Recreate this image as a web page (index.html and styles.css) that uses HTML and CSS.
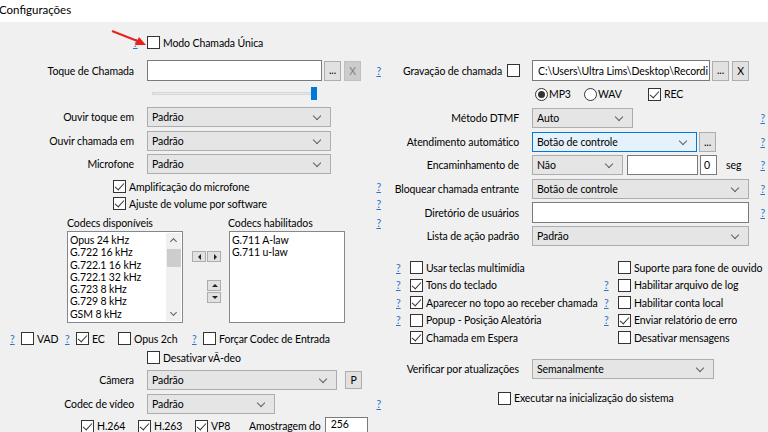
FILE: index.html
```html
<!DOCTYPE html>
<html lang="pt">
<head>
    <meta charset="UTF-8">
    <title>Configurações</title>
    <link rel="stylesheet" href="styles.css">
</head>
<body>
    <div class="titlebar">Configurações</div>

    <div class="dialog">
        <svg class="pointer" width="40" height="20" viewBox="0 0 40 20">
            <line x1="2" y1="2" x2="30" y2="13" stroke="#e8211d" stroke-width="2"/>
            <polygon points="36,16 25,16 29,8" fill="#e8211d"/>
        </svg>

        <div class="col left">
            <div class="row single">
                <a class="help">?</a><span class="cb"></span><span class="txt">Modo Chamada Única</span>
            </div>

            <div class="row tall ringtone">
                <label class="lbl">Toque de Chamada</label>
                <span class="edit w-ring"></span>
                <span class="btn dots">...</span>
                <span class="btn off">X</span>
                <a class="help end">?</a>
            </div>

            <div class="row slider">
                <span class="track"></span><span class="thumb"></span>
            </div>

            <div class="row combo-row first">
                <label class="lbl">Ouvir toque em</label>
                <span class="combo w-dev">Padrão</span>
            </div>
            <div class="row combo-row">
                <label class="lbl">Ouvir chamada em</label>
                <span class="combo w-dev">Padrão</span>
            </div>
            <div class="row combo-row tight">
                <label class="lbl">Microfone</label>
                <span class="combo w-dev">Padrão</span>
            </div>

            <div class="row check mic-boost">
                <span class="cb on"></span><span class="txt">Amplificação do microfone</span>
                <a class="help end">?</a>
            </div>
            <div class="row check mic-soft">
                <span class="cb on"></span><span class="txt">Ajuste de volume por software</span>
                <a class="help end">?</a>
            </div>

            <div class="row codec-heads">
                <span class="head-av">Codecs disponíveis</span>
                <span class="head-en">Codecs habilitados</span>
                <a class="help end">?</a>
            </div>

            <div class="row lists">
                <div class="listbox avail">
                    <div class="items">
                        <div>Opus 24 kHz</div>
                        <div>G.722 16 kHz</div>
                        <div>G.722.1 16 kHz</div>
                        <div>G.722.1 32 kHz</div>
                        <div>G.723 8 kHz</div>
                        <div>G.729 8 kHz</div>
                        <div>GSM 8 kHz</div>
                    </div>
                    <div class="vscroll">
                        <span class="sarrow up"></span>
                        <span class="sthumb"></span>
                        <span class="sarrow down"></span>
                    </div>
                </div>
                <div class="movers">
                    <div class="pair">
                        <span class="mini"><span class="tri l"></span></span><span class="mini"><span class="tri r"></span></span>
                    </div>
                    <div class="updown">
                        <span class="mini"><span class="tri u"></span></span>
                        <span class="mini"><span class="tri d"></span></span>
                    </div>
                </div>
                <div class="listbox enabled">
                    <div class="items">
                        <div>G.711 A-law</div>
                        <div>G.711 u-law</div>
                    </div>
                </div>
            </div>

            <div class="row flags">
                <span class="grp g-vad"><a class="help">?</a><span class="cb"></span><span class="txt">VAD</span></span>
                <span class="grp g-ec"><a class="help">?</a><span class="cb on"></span><span class="txt">EC</span></span>
                <span class="grp g-opus"><span class="cb"></span><span class="txt">Opus 2ch</span></span>
                <span class="grp"><a class="help">?</a><span class="cb"></span><span class="txt">Forçar Codec de Entrada</span></span>
            </div>

            <div class="row check no-video">
                <span class="cb"></span><span class="txt">Desativar vÃ-deo</span>
            </div>

            <div class="row combo-row camera">
                <label class="lbl">Câmera</label>
                <span class="combo w-cam">Padrão</span>
                <span class="btn p-btn">P</span>
            </div>
            <div class="row combo-row">
                <label class="lbl">Codec de vídeo</label>
                <span class="combo w-vcodec">Padrão</span>
                <a class="help end">?</a>
            </div>

            <div class="row vcodecs">
                <span class="grp g-h264"><span class="cb on"></span><span class="txt">H.264</span></span>
                <span class="grp g-h263"><span class="cb on"></span><span class="txt">H.263</span></span>
                <span class="grp g-vp8"><span class="cb on"></span><span class="txt">VP8</span></span>
                <span class="txt">Amostragem do</span>
                <span class="edit w-bitrate">256</span>
            </div>
        </div>

        <div class="col right">
            <div class="row tall record">
                <label class="lbl">Gravação de chamada <span class="cb"></span></label>
                <span class="edit w-path">C:\Users\Ultra Lims\Desktop\Recordi</span>
                <span class="btn dots">...</span>
                <span class="btn x-btn">X</span>
            </div>

            <div class="row formats">
                <span class="radio on"></span><span class="txt f-mp3">MP3</span>
                <span class="radio"></span><span class="txt f-wav">WAV</span>
                <span class="cb on"></span><span class="txt">REC</span>
            </div>

            <div class="row combo-row first">
                <label class="lbl">Método DTMF</label>
                <span class="combo w-dtmf">Auto</span>
                <a class="help end">?</a>
            </div>
            <div class="row combo-row">
                <label class="lbl">Atendimento automático</label>
                <span class="combo focus w-auto">Botão de controle</span>
                <span class="btn dots d-auto">...</span>
                <a class="help end">?</a>
            </div>
            <div class="row combo-row tight">
                <label class="lbl">Encaminhamento de</label>
                <span class="combo w-fwd">Não</span>
                <span class="edit w-fwdnum"></span>
                <span class="edit w-secs">0</span>
                <span class="txt seg">seg</span>
                <a class="help end">?</a>
            </div>
            <div class="row combo-row">
                <label class="lbl">Bloquear chamada entrante</label>
                <span class="combo w-full">Botão de controle</span>
                <a class="help end">?</a>
            </div>
            <div class="row tall dir">
                <label class="lbl">Diretório de usuários</label>
                <span class="edit w-full"></span>
                <a class="help end">?</a>
            </div>
            <div class="row combo-row tight">
                <label class="lbl">Lista de ação padrão</label>
                <span class="combo w-full">Padrão</span>
            </div>

            <div class="options">
                <span class="opt"><a class="help">?</a><span class="cb"></span><span class="txt">Usar teclas multimídia</span></span>
                <span class="opt"><a class="help"></a><span class="cb"></span><span class="txt">Suporte para fone de ouvido</span></span>
                <span class="opt"><a class="help">?</a><span class="cb on"></span><span class="txt">Tons do teclado</span></span>
                <span class="opt"><a class="help">?</a><span class="cb"></span><span class="txt">Habilitar arquivo de log</span></span>
                <span class="opt"><a class="help">?</a><span class="cb on"></span><span class="txt">Aparecer no topo ao receber chamada</span></span>
                <span class="opt"><a class="help">?</a><span class="cb"></span><span class="txt">Habilitar conta local</span></span>
                <span class="opt"><a class="help">?</a><span class="cb"></span><span class="txt">Popup - Posição Aleatória</span></span>
                <span class="opt"><a class="help">?</a><span class="cb on"></span><span class="txt">Enviar relatório de erro</span></span>
                <span class="opt"><a class="help"></a><span class="cb on"></span><span class="txt">Chamada em Espera</span></span>
                <span class="opt"><a class="help"></a><span class="cb"></span><span class="txt">Desativar mensagens</span></span>
            </div>

            <div class="row combo-row updates">
                <label class="lbl">Verificar por atualizações</label>
                <span class="combo w-upd">Semanalmente</span>
            </div>

            <div class="row check startup">
                <span class="cb"></span><span class="txt">Executar na inicialização do sistema</span>
            </div>
        </div>
    </div>
</body>
</html>
```

FILE: styles.css
```css
* {
    box-sizing: border-box;
}
body {
    margin: 0;
    width: 768px;
    height: 432px;
    overflow: hidden;
    font-family: Lato, "Noto Sans", sans-serif;
    font-size: 10.5px;
    letter-spacing: -0.1px;
    color: #000;
    background: #fff;
}
.titlebar {
    height: 22px;
    line-height: 20px;
    margin-left: -1px;
    font-size: 11.5px;
    letter-spacing: 0;
    background: #fff;
}
.dialog {
    position: relative;
    display: flex;
    height: 410px;
    background: #f0f0f0;
}
.pointer {
    position: absolute;
    left: 110px;
    top: 7px;
}
.col {
    display: flex;
    flex-direction: column;
    width: 384px;
    padding-right: 3px;
}

/* rows */
.row {
    display: flex;
    flex-shrink: 0;
    align-items: center;
    height: 20px;
    margin-top: 4px;
    white-space: nowrap;
}
.row.tall {
    height: 21px;
}
.row.tight {
    margin-top: 3px;
}
.lbl {
    display: flex;
    align-items: center;
    justify-content: flex-end;
    gap: 5px;
    width: 134px;
    margin-right: 13px;
    flex: none;
}
.right .lbl {
    width: 135px;
    margin-right: 13px;
}
.txt {
    margin-left: 3px;
}
.help {
    color: #2a73c9;
    text-decoration: underline;
    font-size: 10.5px;
    width: 14px;
    flex: none;
}
.help.end {
    width: auto;
    margin-left: auto;
}

/* controls */
.cb {
    display: inline-block;
    position: relative;
    width: 13px;
    height: 13px;
    border: 1px solid #333;
    background: #fff;
    flex: none;
}
.cb.on::after {
    content: "";
    position: absolute;
    left: 3px;
    top: 0;
    width: 4px;
    height: 8px;
    border-right: 1px solid #333;
    border-bottom: 1px solid #333;
    transform: rotate(42deg);
}
.radio {
    display: inline-block;
    position: relative;
    width: 13px;
    height: 13px;
    border: 1px solid #333;
    border-radius: 50%;
    background: #fff;
    flex: none;
}
.radio.on::after {
    content: "";
    position: absolute;
    left: 2px;
    top: 2px;
    width: 7px;
    height: 7px;
    border-radius: 50%;
    background: #333;
}
.edit {
    display: flex;
    align-items: center;
    height: 21px;
    padding-left: 5px;
    background: #fff;
    border: 1px solid #7a7a7a;
    overflow: hidden;
    flex: none;
}
.combo {
    position: relative;
    display: flex;
    align-items: center;
    height: 20px;
    padding-left: 4px;
    background: #e5e5e5;
    border: 1px solid #adadad;
    flex: none;
}
.combo::after {
    content: "";
    position: absolute;
    right: 10px;
    top: 5px;
    width: 5px;
    height: 5px;
    border-right: 1px solid #606060;
    border-bottom: 1px solid #606060;
    transform: rotate(45deg);
}
.combo.focus {
    background: #e5f1fb;
    border-color: #0078d7;
}
.btn {
    display: flex;
    align-items: center;
    justify-content: center;
    height: 20px;
    width: 17px;
    background: #e1e1e1;
    border: 1px solid #adadad;
    flex: none;
}
.btn.dots {
    margin-left: 2px;
    line-height: 1;
    align-items: flex-end;
    padding-bottom: 4px;
}
.btn.off {
    margin-left: 3px;
    background: #cccccc;
    border-color: #bfbfbf;
    color: #838383;
}

/* left column */
.single {
    height: 13px;
    margin-top: 14px;
    padding-left: 133px;
}
.ringtone {
    margin-top: 11px;
}
.w-ring {
    width: 175px;
}
.slider {
    position: relative;
    height: 13px;
    margin-top: 6px;
    padding-left: 152px;
}
.track {
    width: 162px;
    height: 3px;
    background: #e7eaea;
    border: 1px solid #d6d6d6;
}
.thumb {
    position: absolute;
    left: 311px;
    top: 0;
    width: 6px;
    height: 13px;
    background: #0078d7;
}
.combo-row.first {
    margin-top: 7px;
}
.w-dev {
    width: 184px;
}
.check {
    height: 13px;
    padding-left: 113px;
}
.mic-boost {
    margin-top: 6px;
}
.codec-heads {
    height: 13px;
    margin-top: 6px;
    padding-left: 67px;
}
.head-av {
    width: 161px;
}
.lists {
    height: 92px;
    margin-top: 2px;
    padding-left: 67px;
    align-items: stretch;
}
.listbox {
    display: flex;
    width: 116px;
    background: #fff;
    border: 1px solid #828790;
    flex: none;
}
.items {
    flex: 1;
    padding: 2px 0 0 2px;
    line-height: 12.3px;
}
.vscroll {
    position: relative;
    width: 15px;
    background: #f0f0f0;
    margin: 1px 1px 1px 0;
}
.sarrow {
    position: absolute;
    left: 5px;
    width: 5px;
    height: 5px;
    border-left: 1px solid #606060;
    border-top: 1px solid #606060;
}
.sarrow.up {
    top: 6px;
    transform: rotate(45deg);
}
.sarrow.down {
    bottom: 6px;
    transform: rotate(225deg);
}
.sthumb {
    position: absolute;
    left: 1px;
    right: 0;
    top: 16px;
    height: 18px;
    background: #cdcdcd;
}
.movers {
    width: 46px;
    flex: none;
    position: relative;
}
.mini {
    position: relative;
    display: inline-block;
    width: 14px;
    height: 11px;
    background: #e1e1e1;
    border: 1px solid #adadad;
}
.pair {
    display: flex;
    margin: 20px 0 0 9px;
}
.pair .mini + .mini {
    margin-left: 1px;
}
.updown {
    display: flex;
    flex-direction: column;
    gap: 1px;
    margin: 18px 0 0 24px;
}
.tri {
    position: absolute;
    left: 4px;
    top: 2px;
    width: 0;
    height: 0;
    border: 3px solid transparent;
}
.tri.l {
    left: 2px;
    border-right-color: #222;
}
.tri.r {
    left: 6px;
    border-left-color: #222;
}
.tri.u {
    top: 0;
    border-bottom-color: #222;
}
.tri.d {
    top: 3px;
    border-top-color: #222;
}
.flags {
    height: 13px;
    margin-top: 9px;
    padding-left: 10px;
}
.flags .help {
    width: 11px;
}
.grp {
    display: flex;
    align-items: center;
    flex: none;
}
.g-vad {
    width: 55px;
}
.g-ec {
    width: 53px;
}
.g-opus {
    width: 74px;
}
.no-video {
    margin-top: 6px;
    padding-left: 147px;
}
.camera {
    margin-top: 6px;
}
.w-cam {
    width: 190px;
}
.p-btn {
    margin-left: 8px;
    height: 18px;
}
.w-vcodec {
    width: 128px;
}
.vcodecs {
    height: 18px;
    margin-top: 3px;
    padding-left: 81px;
}
.g-h264,
.g-h263 {
    width: 57px;
}
.g-vp8 {
    width: 51px;
}
.w-bitrate {
    width: 43px;
    margin-left: 4px;
    height: 18px;
    align-items: flex-start;
}

/* right column */
.right .lbl .cb {
    margin-right: -1px;
}
.record {
    margin-top: 38px;
}
.w-path {
    width: 178px;
}
.x-btn {
    margin-left: 3px;
}
.formats {
    height: 14px;
    margin-top: 6px;
    padding-left: 151px;
}
.f-mp3 {
    width: 35px;
    margin-left: 1px;
}
.f-wav {
    width: 50px;
    margin-left: 1px;
}
.w-dtmf {
    width: 101px;
}
.w-auto {
    width: 165px;
}
.d-auto {
    margin-left: 2px;
}
.w-fwd {
    width: 91px;
}
.w-fwdnum {
    width: 71px;
    margin-left: 4px;
    height: 20px;
}
.w-secs {
    width: 17px;
    margin-left: 2px;
    height: 20px;
    padding-left: 3px;
}
.seg {
    margin-left: 9px;
}
.w-full {
    width: 217px;
}
.dir {
    margin-top: 3px;
}
.options {
    display: grid;
    flex-shrink: 0;
    grid-template-columns: 208px auto;
    grid-auto-rows: 17.5px;
    margin-top: 13px;
    padding-left: 12px;
}
.opt {
    display: flex;
    align-items: center;
    white-space: nowrap;
}
.updates {
    margin-top: 12px;
}
.w-upd {
    width: 182px;
}
.startup {
    margin-top: 13px;
    padding-left: 114px;
}
```
